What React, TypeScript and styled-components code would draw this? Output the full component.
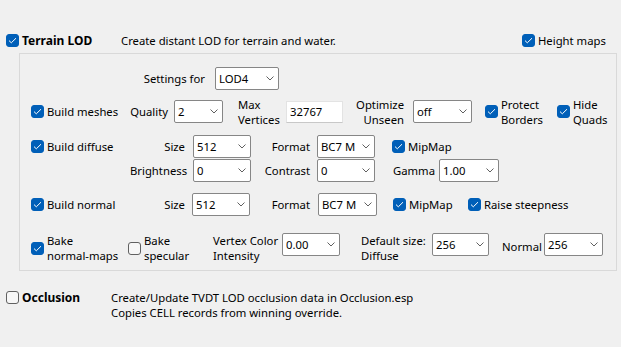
import React from "react";
import styled, { createGlobalStyle } from "styled-components";

const GlobalStyle = createGlobalStyle`
  html, body {
    margin: 0;
    background: #f0f0f0;
  }
  body {
    font-family: "Noto Sans", "Segoe UI", sans-serif;
    font-size: 11.3px;
    color: #000;
  }
`;

const Page = styled.div`
  width: 621px;
  height: 347px;
  box-sizing: border-box;
  padding: 29px 0 0 6px;
  overflow: hidden;
`;

const HeaderRow = styled.div<{ $mt?: number; $h?: number }>`
  display: flex;
  align-items: ${p => (p.$h ? "center" : "flex-start")};
  height: ${p => (p.$h ? `${p.$h}px` : "auto")};
  margin-top: ${p => p.$mt ?? 0}px;
  line-height: 15px;
`;

const Panel = styled.div`
  margin: 1px 0 0 13px;
  width: 598px;
  box-sizing: border-box;
  border: 1px solid #d9d9d9;
  padding: 13px 0 14px 0;
`;

const Row = styled.div<{ $mt?: number; $pl?: number; $h?: number }>`
  display: flex;
  align-items: center;
  height: ${p => p.$h ?? 23}px;
  margin-top: ${p => p.$mt ?? 0}px;
  padding-left: ${p => p.$pl ?? 0}px;
`;

const Label = styled.div<{ $w?: number; $ml?: number; $right?: boolean; $top?: boolean }>`
  width: ${p => (p.$w ? `${p.$w}px` : "auto")};
  margin-left: ${p => p.$ml ?? 0}px;
  text-align: ${p => (p.$right ? "right" : "left")};
  align-self: ${p => (p.$top ? "flex-start" : "center")};
  line-height: 15px;
  white-space: nowrap;
  flex-shrink: 0;
`;

const Title = styled.span`
  font-weight: 700;
  font-size: 12px;
`;

const CheckItem = styled.label<{ $w?: number; $ml?: number; $top?: boolean }>`
  display: flex;
  align-items: center;
  gap: 3px;
  width: ${p => (p.$w ? `${p.$w}px` : "auto")};
  margin-left: ${p => p.$ml ?? 0}px;
  align-self: ${p => (p.$top ? "flex-start" : "center")};
  line-height: 15px;
  white-space: nowrap;
  flex-shrink: 0;
`;

const Box = styled.span<{ $on: boolean }>`
  width: 13px;
  height: 13px;
  box-sizing: border-box;
  border-radius: 3px;
  flex-shrink: 0;
  background: ${p => (p.$on ? "#005fb8" : "#f7f7f7")};
  border: 1px solid ${p => (p.$on ? "#005fb8" : "#616161")};
  display: inline-flex;
  align-items: center;
  justify-content: center;
`;

const SelectBox = styled.div<{ $w: number; $ml?: number }>`
  width: ${p => p.$w}px;
  height: 23px;
  margin-left: ${p => p.$ml ?? 0}px;
  box-sizing: border-box;
  background: #fff;
  border: 1px solid #868686;
  border-radius: 2px;
  display: flex;
  align-items: center;
  padding: 0 4px 0 3px;
  flex-shrink: 0;
`;

const SelectText = styled.span`
  flex: 1;
  white-space: nowrap;
  overflow: hidden;
`;

const TextInput = styled.div<{ $w: number; $ml?: number }>`
  width: ${p => p.$w}px;
  height: 22px;
  margin-left: ${p => p.$ml ?? 0}px;
  box-sizing: border-box;
  background: #fff;
  border: 1px solid #e3e3e3;
  border-bottom-color: #c8c8c8;
  display: flex;
  align-items: center;
  padding-left: 3px;
  flex-shrink: 0;
`;

const Desc = styled.div<{ $w?: number }>`
  width: ${p => (p.$w ? `${p.$w}px` : "auto")};
  line-height: 15px;
  flex-shrink: 0;
`;

function Check(props: { on?: boolean; children: React.ReactNode; w?: number; ml?: number; top?: boolean }) {
  const on = props.on ?? true;
  return (
    <CheckItem $w={props.w} $ml={props.ml} $top={props.top}>
      <Box $on={on}>
        {on && (
          <svg width="9" height="7" viewBox="0 0 9 7">
            <path d="M1 3.6 L3.3 5.8 L8 1.2" fill="none" stroke="#fff" strokeWidth="1" />
          </svg>
        )}
      </Box>
      <span>{props.children}</span>
    </CheckItem>
  );
}

function Select(props: { value: string; w: number; ml?: number }) {
  return (
    <SelectBox $w={props.w} $ml={props.ml}>
      <SelectText>{props.value}</SelectText>
      <svg width="8" height="5" viewBox="0 0 8 5">
        <path d="M0.5 0.5 L4 4 L7.5 0.5" fill="none" stroke="#606060" strokeWidth="1" />
      </svg>
    </SelectBox>
  );
}

export default function App() {
  return (
    <>
      <GlobalStyle />
      <Page>
        <HeaderRow $h={23}>
          <Check w={115}>
            <Title>Terrain LOD</Title>
          </Check>
          <Desc $w={401}>Create distant LOD for terrain and water.</Desc>
          <Check>Height maps</Check>
        </HeaderRow>

        <Panel>
          <Row>
            <Label $w={185} $right>Settings for</Label>
            <Select value="LOD4" w={64} ml={10} />
          </Row>

          <Row $mt={10} $pl={11}>
            <Check w={99}>Build meshes</Check>
            <Label $w={38} $right>Quality</Label>
            <Select value="2" w={49} ml={6} />
            <Label $w={42} $ml={15}>Max<br />Vertices</Label>
            <TextInput $w={57} $ml={6}>32767</TextInput>
            <Label $w={61} $right>Optimize<br />Unseen</Label>
            <Select value="off" w={59} ml={9} />
            <Check w={72} ml={13}>Protect<br />Borders</Check>
            <Check>Hide<br />Quads</Check>
          </Row>

          <Row $mt={12} $pl={11} $h={22}>
            <Check w={99}>Build diffuse</Check>
            <Label $w={55} $right>Size</Label>
            <Select value="512" w={58} ml={8} />
            <Label $w={59} $right>Format</Label>
            <Select value="BC7 M" w={58} ml={7} />
            <Check ml={17}>MipMap</Check>
          </Row>

          <Row $mt={2} $pl={11}>
            <Label $w={99} />
            <Label $w={55} $right>Brightness</Label>
            <Select value="0" w={58} ml={8} />
            <Label $w={59} $right>Contrast</Label>
            <Select value="0" w={58} ml={7} />
            <Label $w={60} $right>Gamma</Label>
            <Select value="1.00" w={60} ml={4} />
          </Row>

          <Row $mt={11} $pl={11}>
            <Check w={99}>Build normal</Check>
            <Label $w={55} $right>Size</Label>
            <Select value="512" w={58} ml={7} />
            <Label $w={60} $right>Format</Label>
            <Select value="BC7 M" w={59} ml={8} />
            <Check w={75} ml={16}>MipMap</Check>
            <Check>Raise steepness</Check>
          </Row>

          <Row $mt={17} $pl={11}>
            <Check w={97} top>Bake<br />normal-maps</Check>
            <Check w={85} top on={false}>Bake<br />specular</Check>
            <Label $w={63} $top>Vertex Color<br />Intensity</Label>
            <Select value="0.00" w={58} ml={6} />
            <Label $w={63} $ml={21} $top>Default size:<br />Diffuse</Label>
            <Select value="256" w={57} ml={8} />
            <Label $w={39} $ml={13} style={{ paddingTop: 3 }}>Normal</Label>
            <Select value="256" w={59} ml={3} />
          </Row>
        </Panel>

        <HeaderRow $mt={19}>
          <Check w={105} on={false} top>
            <Title>Occlusion</Title>
          </Check>
          <Desc>
            Create/Update TVDT LOD occlusion data in Occlusion.esp
            <br />
            Copies CELL records from winning override.
          </Desc>
        </HeaderRow>
      </Page>
    </>
  );
}
